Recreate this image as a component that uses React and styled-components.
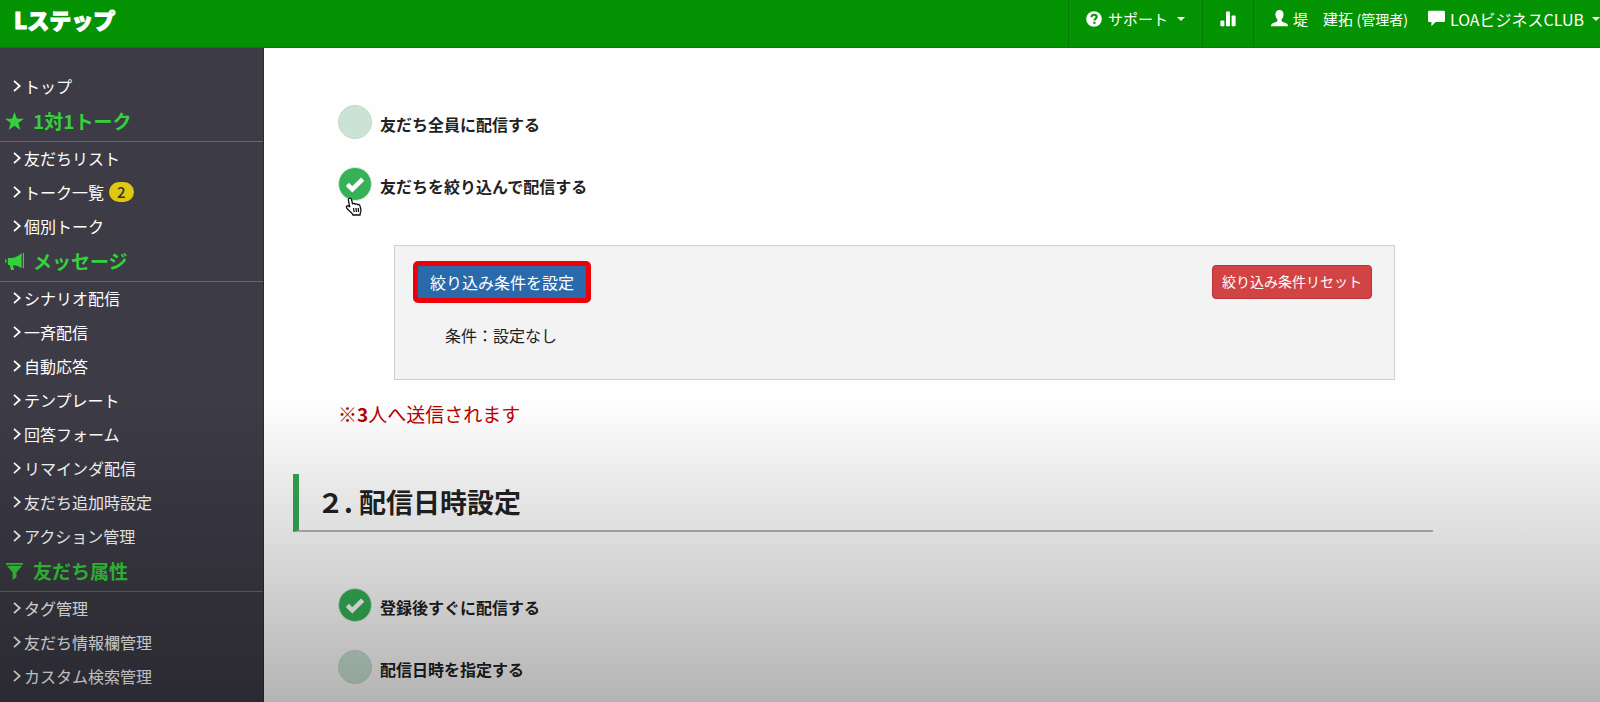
import React, { useState } from 'react';
import styled, { createGlobalStyle } from 'styled-components';

const menu = [
  { items: [{ label: 'トップ' }] },
  {
    title: '1対1トーク',
    icon: 'star',
    items: [
      { label: '友だちリスト' },
      { label: 'トーク一覧', badge: 2 },
      { label: '個別トーク' }
    ]
  },
  {
    title: 'メッセージ',
    icon: 'bullhorn',
    items: [
      { label: 'シナリオ配信' },
      { label: '一斉配信' },
      { label: '自動応答' },
      { label: 'テンプレート' },
      { label: '回答フォーム' },
      { label: 'リマインダ配信' },
      { label: '友だち追加時設定' },
      { label: 'アクション管理' }
    ]
  },
  {
    title: '友だち属性',
    icon: 'filter',
    items: [
      { label: 'タグ管理' },
      { label: '友だち情報欄管理' },
      { label: 'カスタム検索管理' }
    ]
  }
];

// 20x20 shapes
const shapes = {
  star: <path d='M10 0l2.6 7H20l-6 4.5 2.2 7.5L10 14.500 3.800 19 6 11.500 0 7h7.400z' />,
  bullhorn: (
    <path d='M18.800 1h1.200v16h-1.200zM17.500 1v16c-3-1.800-6-2.800-9-3.200l1 5.200H6.300L5 13.600H3V6.300h3.500C11 6.300 14.500 4 17.500 1zM0 8h1.500v3H0z' />
  ),
  filter: <path d='M1 1h18v2H1zM2 4h16l-6 7v5l-4 3v-8z' />,
  question: (
    <>
      <circle cx='10' cy='10' r='9.800' />
      <path
        d='M6.800 7.800c0-2 1.300-3.100 3.200-3.100s3.300 1.100 3.300 2.800c0 2.200-2.800 2.300-2.800 4.500'
        fill='none'
        stroke='#049302'
        strokeWidth='2.600'
      />
      <path d='M9.100 13.400h2.800v2.600H9.100z' fill='#049302' />
    </>
  ),
  stats: (
    <>
      <rect x='0.500' y='12' width='5' height='7' rx='1' />
      <rect x='7.500' y='0.500' width='5' height='18.500' rx='1' />
      <rect x='14.500' y='5.500' width='5' height='13.500' rx='1' />
    </>
  ),
  user: (
    <path d='M10 0c3 0 4.800 2 4.800 5 0 2.400-.8 4.700-2.300 6v1.500c0 1 1.500 1.400 3.500 2.200 2.500 1 4 1.800 4 4.300H0c0-2.500 1.500-3.300 4-4.300 2-.8 3.500-1.200 3.500-2.200V11C6 9.700 5.200 7.400 5.200 5c0-3 1.800-5 4.800-5z' />
  ),
  comment: <path d='M1.500 1h17q1.500 0 1.500 1.500v10q0 1.500-1.500 1.500H9l-5 5v-5H1.500Q0 14 0 12.500v-10Q0 1 1.500 1z' />,
  chevron: <path d='M5 1.500l9.500 8.500L5 18.500' fill='none' stroke='currentColor' strokeWidth='3' />,
  check: <path d='M1.500 10.500l5.500 5.500L18.500 4.500' fill='none' stroke='currentColor' strokeWidth='5' />
};

function Icon({ name, size }) {
  return (
    <Svg viewBox='0 0 20 20' $size={size} aria-hidden='true'>
      {shapes[name]}
    </Svg>
  );
}

function Option({ name, label, checked, onChange, children }) {
  return (
    <OptionLabel>
      <Radio type='radio' name={name} checked={checked} onChange={onChange} />
      <Circle $checked={checked}>
        {checked && <Icon name='check' size={18} />}
        {children}
      </Circle>
      <OptionText>{label}</OptionText>
    </OptionLabel>
  );
}

function App() {
  const [target, setTarget] = useState('filtered');
  const [timing, setTiming] = useState('now');

  return (
    <Page>
      <GlobalStyle />
      <Header>
        <Logo href='#'>Lステップ</Logo>
        <Nav>
          <NavButton>
            <Icon name='question' size={16} />
            サポート
            <Caret />
          </NavButton>
          <NavButton aria-label='統計'>
            <Icon name='stats' size={16} />
          </NavButton>
          <NavGroup>
            <NavLink href='#'>
              <Icon name='user' size={17} />
              <UserName>
                堤　建拓 <small>(管理者)</small>
              </UserName>
            </NavLink>
            <NavLink as='button'>
              <Icon name='comment' size={17} />
              LOAビジネスCLUB
              <Caret />
            </NavLink>
          </NavGroup>
        </Nav>
      </Header>

      <Body>
        <Sidebar>
          {menu.map(group => (
            <React.Fragment key={group.title || 'top'}>
              {group.title && (
                <GroupTitle>
                  <Icon name={group.icon} size={19} />
                  {group.title}
                </GroupTitle>
              )}
              {group.items.map(item => (
                <MenuItem key={item.label} href='#'>
                  <Icon name='chevron' size={12} />
                  {item.label}
                  {item.badge && <Badge>{item.badge}</Badge>}
                </MenuItem>
              ))}
            </React.Fragment>
          ))}
        </Sidebar>

        <Main>
          <Options>
            <Option
              name='target'
              label='友だち全員に配信する'
              checked={target === 'all'}
              onChange={() => setTarget('all')}
            />
            <Option
              name='target'
              label='友だちを絞り込んで配信する'
              checked={target === 'filtered'}
              onChange={() => setTarget('filtered')}
            >
              <Hand viewBox='0 0 18 20' aria-hidden='true'>
                <path d='M4 1.500c1-.8 2.200-.2 2.500 1l1 4.200c.8-.6 2-.5 2.500.4.900-.6 2-.3 2.500.6 1-.5 2.300 0 2.500 1.200l.9 3.600c.4 2-.9 3.500-.9 5.500H8c-1-2.500-3.500-4-5.500-6-1-1-1.500-2.200-.7-2.900.9-.7 2.200 0 3 1L3.300 3c-.1-.6.200-1.200.7-1.500zM8.500 11l.6 4M11 11l.4 4M13.300 11l.2 4' />
              </Hand>
            </Option>
          </Options>

          <FilterBox>
            <FilterActions>
              <SetButton>絞り込み条件を設定</SetButton>
              <ResetButton>絞り込み条件リセット</ResetButton>
            </FilterActions>
            <Condition>条件：設定なし</Condition>
          </FilterBox>

          <Notice>
            ※<strong>3</strong>人へ送信されます
          </Notice>

          <SectionTitle>２. 配信日時設定</SectionTitle>

          <Options>
            <Option
              name='timing'
              label='登録後すぐに配信する'
              checked={timing === 'now'}
              onChange={() => setTiming('now')}
            />
            <Option
              name='timing'
              label='配信日時を指定する'
              checked={timing === 'later'}
              onChange={() => setTiming('later')}
            />
          </Options>
        </Main>
      </Body>
    </Page>
  );
}

export default App;

const GlobalStyle = createGlobalStyle`
  * {
    box-sizing: border-box;
  }

  body {
    margin: 0;
    font-family: 'Noto Sans CJK JP', sans-serif;
    font-size: 16px;
    line-height: 24px;
    color: #222;
  }

  a {
    text-decoration: none;
  }

  button {
    font: inherit;
    cursor: pointer;
  }
`;

const Page = styled.div`
  position: relative;
  display: flex;
  flex-direction: column;
  height: 100vh;
  overflow: hidden;

  /* shade towards the bottom of the page */
  &::after {
    content: '';
    position: absolute;
    inset: 57% 0 0;
    background: linear-gradient(rgba(0, 0, 0, 0), rgba(0, 0, 0, 0.29));
    pointer-events: none;
  }
`;

const Svg = styled.svg`
  flex: none;
  width: ${props => props.$size}px;
  height: ${props => props.$size}px;
  fill: currentColor;
`;

const Header = styled.header`
  display: flex;
  justify-content: space-between;
  flex: none;
  height: 48px;
  background: #049302;
  border-bottom: 1px solid #038002;
`;

const Logo = styled.a`
  padding: 3px 14px;
  font-size: 22px;
  line-height: 32px;
  font-weight: 900;
  color: #fff;
  -webkit-text-stroke: 1px #fff;
`;

const Nav = styled.nav`
  display: flex;
`;

const NavButton = styled.button`
  display: flex;
  align-items: center;
  gap: 6px;
  padding: 0 17px 10px;
  border: 0;
  border-left: 1px solid #037a02;
  background: none;
  font-size: 15px;
  color: #fff;
`;

const NavGroup = styled.div`
  display: flex;
  gap: 20px;
  padding-left: 17px;
  border-left: 1px solid #037a02;
`;

const NavLink = styled.a`
  display: flex;
  align-items: center;
  gap: 5px;
  padding: 0 0 10px;
  border: 0;
  background: none;
  color: #fff;
  white-space: nowrap;
`;

const UserName = styled.span`
  font-size: 15px;

  small {
    font-size: 14px;
  }
`;

const Caret = styled.span`
  margin-left: 3px;
  border: 4px solid transparent;
  border-top-color: #fff;
  border-bottom: 0;
`;

const Body = styled.div`
  display: flex;
  flex: 1;
  min-height: 0;
`;

const Sidebar = styled.nav`
  flex: none;
  width: 264px;
  padding-top: 22px;
  overflow: hidden;
  background: #3c3b46;
  border-right: 1px solid #2c2b36;
`;

const GroupTitle = styled.h2`
  display: flex;
  align-items: center;
  gap: 9px;
  height: 38px;
  margin: 0;
  padding: 0 0 3px 5px;
  border-bottom: 1px solid #1f9a2a;
  font-size: 19px;
  font-weight: 700;
  color: #35d03c;
`;

const MenuItem = styled.a`
  display: flex;
  align-items: center;
  height: 34px;
  padding: 0 0 2px 11px;
  gap: 1px;
  color: #fff;
`;

const Badge = styled.span`
  margin-left: 4px;
  padding: 0 8px;
  border-radius: 10px;
  background: #e0c810;
  font-size: 15px;
  line-height: 20px;
  font-weight: 500;
  color: #333;
`;

const Main = styled.main`
  flex: 1;
  padding: 57px 167px 0 29px;
  background: #fefefe;
`;

const Options = styled.div`
  display: flex;
  flex-direction: column;
  gap: 28px;
  padding-left: 45px;
`;

const OptionLabel = styled.label`
  display: flex;
  align-items: center;
  gap: 8px;
  font-weight: 700;
  cursor: pointer;
`;

const Radio = styled.input`
  position: absolute;
  opacity: 0;
`;

const Circle = styled.span`
  position: relative;
  display: flex;
  align-items: center;
  justify-content: center;
  width: 34px;
  height: 34px;
  border: 1px solid ${props => (props.$checked ? '#d5efdc' : '#c4d9cb')};
  border-radius: 50%;
  background: ${props => (props.$checked ? '#36b156' : '#cbe3d4')};
  color: #fff;
`;

const OptionText = styled.span`
  padding-top: 4px;
`;

/* pointer lying over the radio */
const Hand = styled.svg`
  position: absolute;
  top: 29px;
  left: 6px;
  width: 18px;
  height: 20px;
  fill: #fff;
  stroke: #111;
  stroke-width: 1.3;
`;

const FilterBox = styled.section`
  margin: 44px 38px 0 101px;
  padding: 15px 22px 32px 18px;
  border: 1px solid #cfcfcf;
  background: #f3f3f3;
`;

const FilterActions = styled.div`
  display: flex;
  align-items: center;
  justify-content: space-between;
`;

const SetButton = styled.button`
  padding: 4px 12px;
  border: 5px solid #ee0008;
  border-radius: 5px;
  background: #2a6aab;
  color: #fff;
`;

const ResetButton = styled.button`
  padding: 3px 9px 5px;
  border: 1px solid #b83038;
  border-radius: 4px;
  background: #d24444;
  font-size: 14px;
  color: #fff;
`;

const Condition = styled.p`
  margin: 20px 0 0 32px;
`;

const Notice = styled.p`
  margin: 20px 0 0 45px;
  font-size: 19px;
  line-height: 28px;
  color: #b80000;
`;

const SectionTitle = styled.h1`
  margin: 46px 0 56px;
  padding: 8px 18px;
  border-left: 6px solid #34a853;
  border-bottom: 2px solid #b5b5b5;
  font-size: 27px;
  line-height: 40px;
`;
